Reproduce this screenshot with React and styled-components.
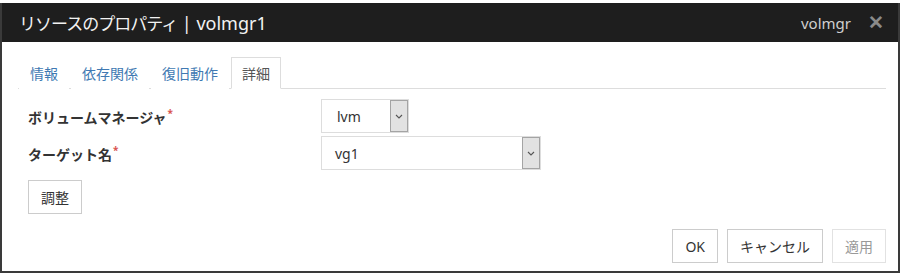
import React from 'react'
import styled, { createGlobalStyle } from 'styled-components'

const Global = createGlobalStyle`
  html, body { margin:0; padding:0; background:#fff; }
  body { font-family:"Noto Sans","Noto Sans CJK JP",sans-serif; color:#333; }
`

const Page = styled.div`
  padding-top:3px;
  width:904px;
`

const Dialog = styled.div`
  width:896px;
  border:2px solid #3a3a3a;
  border-top:none;
  background:#fff;
`

const Header = styled.div`
  height:39px;
  background:#1e1e1e;
  display:flex;
  align-items:center;
  justify-content:space-between;
  padding:0 14px 0 17px;
`

const Title = styled.div`
  color:#f2f2f2;
  font-size:18px;
`

const Kana = styled.span`
  font-size:17px;
  letter-spacing:-1px;
`

const HeaderRight = styled.div`
  display:flex;
  align-items:center;
  gap:17px;
  color:#cfcfcf;
  font-size:15px;
`

const Close = styled.span`
  color:#8a8a8a;
  font-size:19px;
  font-weight:bold;
  line-height:1;
`

const Body = styled.div`
  padding:15px 12px 8px 16px;
`

const Tabs = styled.div`
  display:flex;
  height:31px;
  border-bottom:1px solid #ddd;
  padding-left:1px;
`

const Tab = styled.div`
  box-sizing:border-box;
  height:32px;
  padding:0 10px;
  margin-right:2px;
  display:flex;
  align-items:center;
  font-size:14px;
  color:${p => (p.active ? '#555' : '#4079b2')};
  background:#fff;
  border:1px solid ${p => (p.active ? '#ddd' : 'transparent')};
  border-bottom-color:${p => (p.active ? '#fff' : 'transparent')};
`

const Form = styled.div`
  padding:10px 0 0 10px;
  display:flex;
  flex-direction:column;
  gap:3px;
`

const Row = styled.div`
  display:flex;
  align-items:center;
`

const Label = styled.div`
  width:293px;
  font-size:14px;
  font-weight:bold;
  color:#333;
`

const Req = styled.sup`
  color:#d9534f;
  font-size:10px;
  margin-left:1px;
`

const Select = styled.div`
  box-sizing:border-box;
  width:${p => p.w}px;
  height:34px;
  border:1px solid #ddd;
  display:flex;
  align-items:stretch;
  font-size:14px;
  color:#333;
`

const Value = styled.div`
  flex:1;
  display:flex;
  align-items:center;
  padding-left:${p => p.pad}px;
`

const Arrow = styled.div`
  width:16px;
  background:#e2e2e2;
  border:1px solid #a4a4a4;
  display:flex;
  align-items:center;
  justify-content:center;
`

const Button = styled.button`
  box-sizing:border-box;
  height:34px;
  padding:0 12px;
  background:#fff;
  border:1px solid ${p => (p.disabled ? '#e2e2e2' : '#ccc')};
  color:${p => (p.disabled ? '#999' : '#333')};
  font-family:inherit;
  font-size:14px;
`

const AdjustRow = styled.div`
  margin-top:7px;
`

const Footer = styled.div`
  display:flex;
  justify-content:flex-end;
  gap:9px;
  margin-top:15px;
`

const Chevron = () => (
  <svg width="8" height="5" viewBox="0 0 8 5">
    <path d="M1 1l3 3 3-3" fill="none" stroke="#555" strokeWidth="1.1" />
  </svg>
)

export default function App() {
  return (
    <Page>
      <Global />
      <Dialog>
        <Header>
          <Title><Kana>リソースのプロパティ</Kana> | volmgr1</Title>
          <HeaderRight>
            volmgr <Close>✕</Close>
          </HeaderRight>
        </Header>
        <Body>
          <Tabs>
            <Tab>情報</Tab>
            <Tab>依存関係</Tab>
            <Tab>復旧動作</Tab>
            <Tab active>詳細</Tab>
          </Tabs>
          <Form>
            <Row>
              <Label>ボリュームマネージャ<Req>*</Req></Label>
              <Select w={88}>
                <Value pad={15}>lvm</Value>
                <Arrow><Chevron /></Arrow>
              </Select>
            </Row>
            <Row>
              <Label>ターゲット名<Req>*</Req></Label>
              <Select w={220}>
                <Value pad={13}>vg1</Value>
                <Arrow><Chevron /></Arrow>
              </Select>
            </Row>
            <AdjustRow>
              <Button>調整</Button>
            </AdjustRow>
          </Form>
          <Footer>
            <Button>OK</Button>
            <Button>キャンセル</Button>
            <Button disabled>適用</Button>
          </Footer>
        </Body>
      </Dialog>
    </Page>
  )
}
